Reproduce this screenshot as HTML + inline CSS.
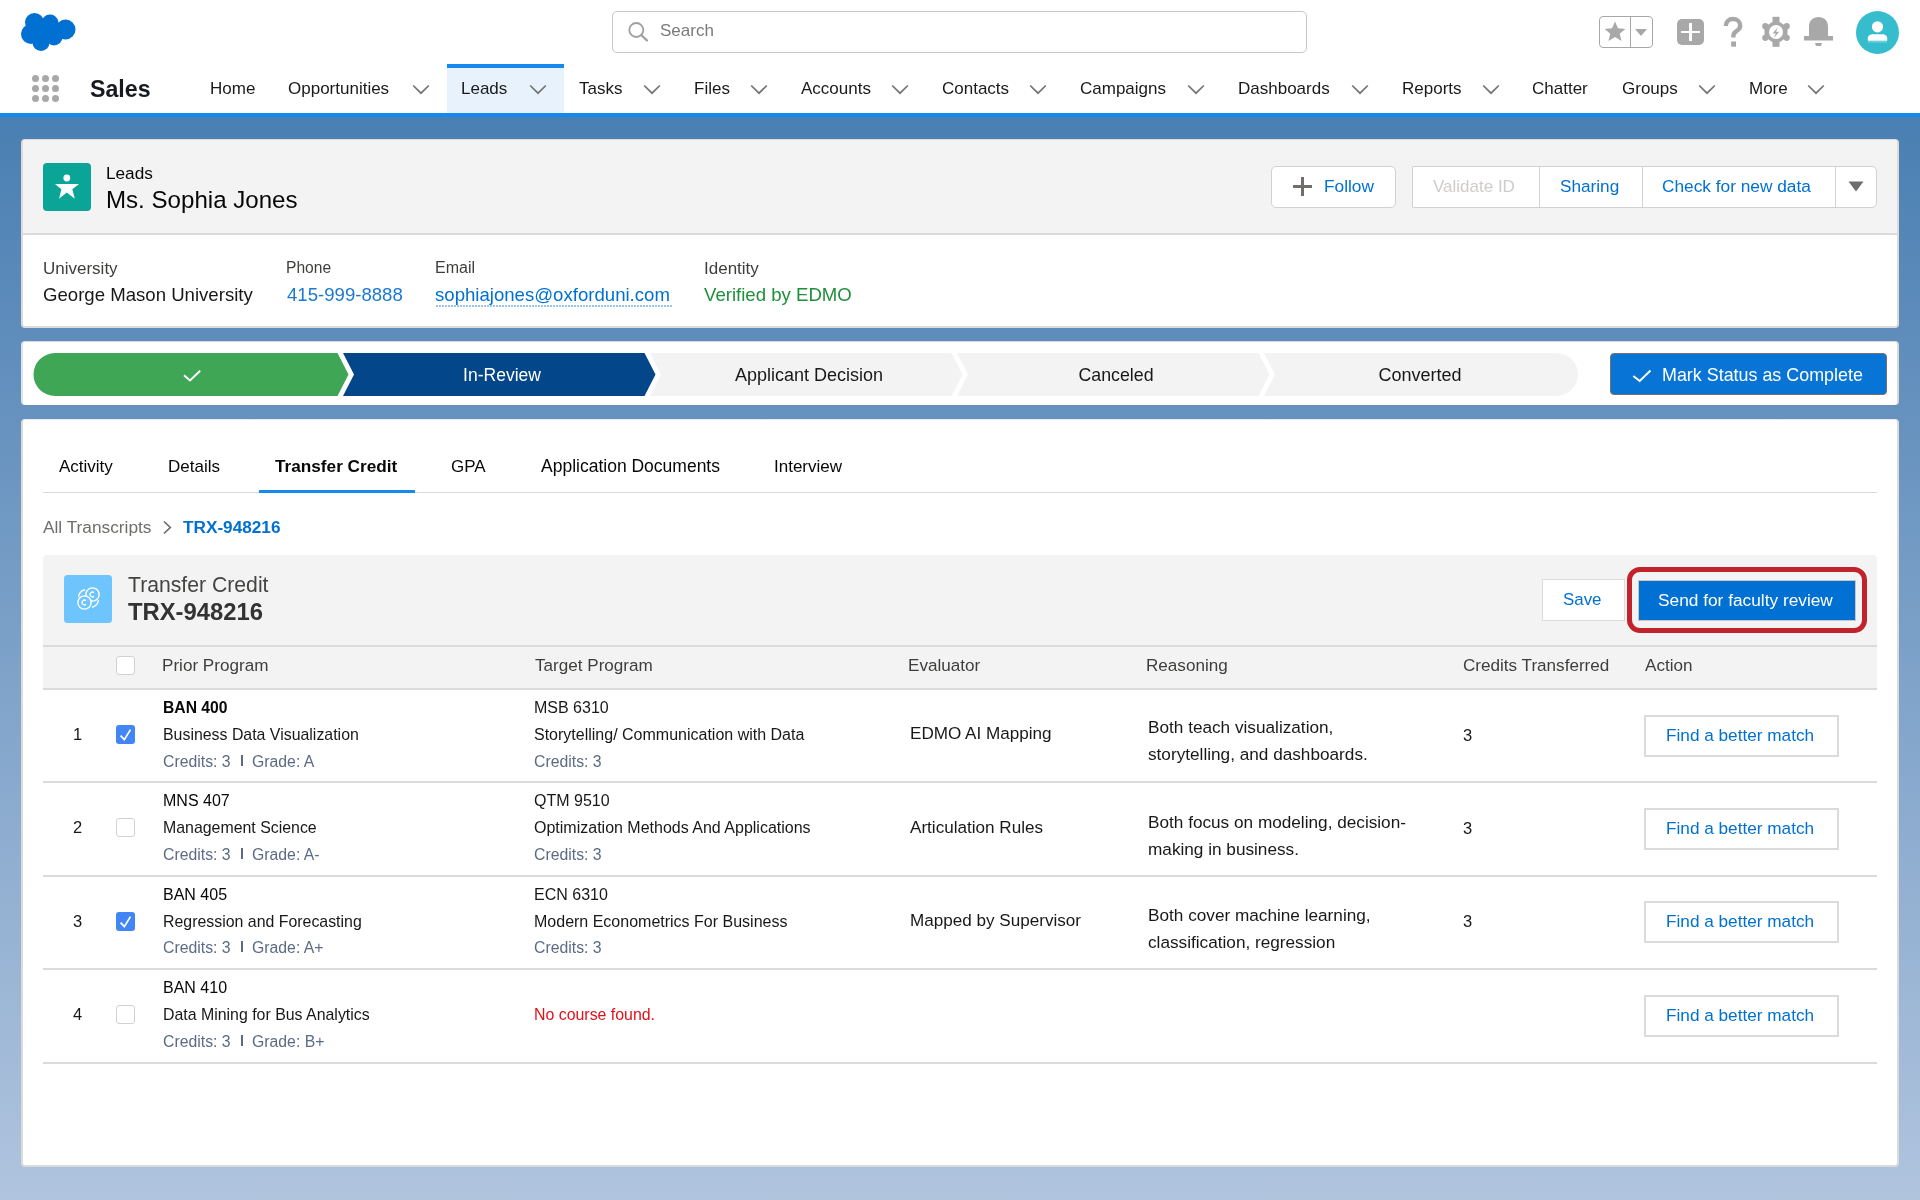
<!DOCTYPE html>
<html><head><meta charset="utf-8"><title>Lead</title>
<style>
*{margin:0;padding:0;box-sizing:border-box}
html,body{width:1920px;height:1200px;overflow:hidden}
body{position:relative;font-family:"Liberation Sans",sans-serif;background:#fff;-webkit-font-smoothing:antialiased}
.a{position:absolute}
.t{position:absolute;white-space:nowrap;will-change:transform}
svg{position:absolute;overflow:visible}
</style></head><body>
<div class="a" style="left:0px;top:0px;width:1920px;height:113px;background:#fff"></div>
<div class="a" style="left:0px;top:113px;width:1920px;height:4px;background:#1589ee"></div>
<div class="a" style="left:0px;top:117px;width:1920px;height:1083px;background:linear-gradient(#4a7fb3,#b0c4de)"></div>
<svg style="left:20px;top:12px" width="57" height="40" viewBox="0 0 57 40"><g fill="#0070d2"><circle cx="14.5" cy="10.5" r="9.5"/><circle cx="30" cy="11" r="8.5"/><circle cx="45.5" cy="17.5" r="10"/><circle cx="11" cy="22" r="10"/><circle cx="21" cy="30.5" r="8.5"/><circle cx="34" cy="25" r="8.5"/><circle cx="25" cy="19" r="10"/></g></svg>
<div class="a" style="left:612px;top:11px;width:695px;height:42px;border:1px solid #c9c7c5;border-radius:5px;background:#fff"></div>
<svg style="left:627px;top:21px" width="24" height="24" viewBox="0 0 24 24"><circle cx="9.3" cy="9" r="7" fill="none" stroke="#a0a0a0" stroke-width="1.8"/><line x1="14.3" y1="14" x2="20" y2="19.5" stroke="#a0a0a0" stroke-width="2.4" stroke-linecap="round"/></svg>
<div class="t" style="left:659.70px;top:20.11px;font-size:17px;line-height:22px;color:#7a7a7a;">Search</div>
<div class="a" style="left:1599px;top:16px;width:54px;height:32px;border:1px solid #a8a8a8;border-radius:4px"></div>
<div class="a" style="left:1629.5px;top:16px;width:1.6px;height:32px;background:#a8a8a8"></div>
<svg style="left:1602.5px;top:20px" width="24" height="23" viewBox="0 0 24 24"><path fill="#a8a8a8" d="M12 1.5l3.1 7.2 7.7.6-5.9 5 1.9 7.6L12 17.8 5.2 21.9l1.9-7.6-5.9-5 7.7-.6z"/></svg>
<svg style="left:1635px;top:29px" width="12" height="8" viewBox="0 0 12 8"><path fill="#a8a8a8" d="M0 0h12L6 7z"/></svg>
<div class="a" style="left:1677px;top:19px;width:27px;height:26px;background:#a8a8a8;border-radius:5px"></div>
<div class="a" style="left:1689.4px;top:23px;width:2.2px;height:18px;background:#fff"></div>
<div class="a" style="left:1681.2px;top:30.9px;width:19px;height:2.2px;background:#fff"></div>
<svg style="left:1721px;top:16px" width="24" height="32" viewBox="0 0 24 32"><path d="M4.8 10C4.8 5.5 8 3 12 3s7.2 2.6 7.2 6.6c0 3.4-2.4 4.8-4.3 6-1.6 1-2.5 2-2.5 4.2v1.6" fill="none" stroke="#a8a8a8" stroke-width="4.4"/><rect x="10.2" y="25.5" width="4.8" height="5.2" fill="#a8a8a8"/></svg>
<svg style="left:1762px;top:16px" width="28" height="31" viewBox="0 0 28 31"><g fill="#a8a8a8"><circle cx="14" cy="16" r="10.5"/><rect x="10.5" y="0.8" width="7" height="6"/><rect x="10.5" y="25" width="7" height="5.8"/><circle cx="3.3" cy="10.2" r="3.1"/><circle cx="24.7" cy="10.2" r="3.1"/><circle cx="3.3" cy="21.8" r="3.1"/><circle cx="24.7" cy="21.8" r="3.1"/><rect x="2.5" y="10" width="4" height="12"/><rect x="21.5" y="10" width="4" height="12"/></g><circle cx="14" cy="16" r="7" fill="#fff"/><path fill="#a8a8a8" d="M15.8 11.2l-5.2 6.2h3.2l-2.2 4.8 5.6-6.4h-3.2z"/></svg>
<svg style="left:1803px;top:16px" width="31" height="32" viewBox="0 0 31 32"><path fill="#a8a8a8" d="M15.5 1c5.6 0 9.5 3.6 9.5 9.5V20h5v4.5H1V20h5v-9.5C6 4.6 9.9 1 15.5 1z"/><path fill="#a8a8a8" d="M12 27h7l-1 3h-5z"/></svg>
<div class="a" style="left:1856px;top:11px;width:43px;height:43px;background:#35bdcd;border-radius:50%"></div>
<svg style="left:1856px;top:11px" width="43" height="43" viewBox="0 0 43 43"><circle cx="21.5" cy="15.8" r="5.6" fill="#fff"/><path fill="#fff" d="M11.8 29.8V27.2C11.8 24.6 14.5 23.3 17 23.3H26C28.5 23.3 31.2 24.6 31.2 27.2V29.8Z"/><rect x="12" y="30.4" width="19" height="1" fill="#fff" opacity=".45"/></svg>
<div class="a" style="left:32px;top:75px;width:7px;height:7px;background:#a8a8a8;border-radius:50%"></div>
<div class="a" style="left:42px;top:75px;width:7px;height:7px;background:#a8a8a8;border-radius:50%"></div>
<div class="a" style="left:52px;top:75px;width:7px;height:7px;background:#a8a8a8;border-radius:50%"></div>
<div class="a" style="left:32px;top:85px;width:7px;height:7px;background:#a8a8a8;border-radius:50%"></div>
<div class="a" style="left:42px;top:85px;width:7px;height:7px;background:#a8a8a8;border-radius:50%"></div>
<div class="a" style="left:52px;top:85px;width:7px;height:7px;background:#a8a8a8;border-radius:50%"></div>
<div class="a" style="left:32px;top:95px;width:7px;height:7px;background:#a8a8a8;border-radius:50%"></div>
<div class="a" style="left:42px;top:95px;width:7px;height:7px;background:#a8a8a8;border-radius:50%"></div>
<div class="a" style="left:52px;top:95px;width:7px;height:7px;background:#a8a8a8;border-radius:50%"></div>
<div class="t" style="left:90.20px;top:73.96px;font-size:23.2px;line-height:30px;color:#16191f;font-weight:700;">Sales</div>
<div class="a" style="left:447px;top:64px;width:117px;height:49px;background:#e7f2fc"></div>
<div class="a" style="left:447px;top:64px;width:117px;height:4px;background:#1589ee"></div>
<div class="t" style="left:210.20px;top:77.91px;font-size:17px;line-height:22px;color:#1a1a1a;">Home</div>
<div class="t" style="left:288.20px;top:77.91px;font-size:17px;line-height:22px;color:#1a1a1a;">Opportunities</div>
<svg style="left:412px;top:84px" width="18" height="11" viewBox="0 0 18 11"><path d="M1.2 1.5L9 9.2 16.8 1.5" fill="none" stroke="#747474" stroke-width="1.7"/></svg>
<div class="t" style="left:461.20px;top:77.91px;font-size:17px;line-height:22px;color:#1a1a1a;">Leads</div>
<svg style="left:529px;top:84px" width="18" height="11" viewBox="0 0 18 11"><path d="M1.2 1.5L9 9.2 16.8 1.5" fill="none" stroke="#747474" stroke-width="1.7"/></svg>
<div class="t" style="left:579.20px;top:77.91px;font-size:17px;line-height:22px;color:#1a1a1a;">Tasks</div>
<svg style="left:643px;top:84px" width="18" height="11" viewBox="0 0 18 11"><path d="M1.2 1.5L9 9.2 16.8 1.5" fill="none" stroke="#747474" stroke-width="1.7"/></svg>
<div class="t" style="left:694.20px;top:77.91px;font-size:17px;line-height:22px;color:#1a1a1a;">Files</div>
<svg style="left:750px;top:84px" width="18" height="11" viewBox="0 0 18 11"><path d="M1.2 1.5L9 9.2 16.8 1.5" fill="none" stroke="#747474" stroke-width="1.7"/></svg>
<div class="t" style="left:801.20px;top:77.91px;font-size:17px;line-height:22px;color:#1a1a1a;">Accounts</div>
<svg style="left:891px;top:84px" width="18" height="11" viewBox="0 0 18 11"><path d="M1.2 1.5L9 9.2 16.8 1.5" fill="none" stroke="#747474" stroke-width="1.7"/></svg>
<div class="t" style="left:942.20px;top:77.91px;font-size:17px;line-height:22px;color:#1a1a1a;">Contacts</div>
<svg style="left:1029px;top:84px" width="18" height="11" viewBox="0 0 18 11"><path d="M1.2 1.5L9 9.2 16.8 1.5" fill="none" stroke="#747474" stroke-width="1.7"/></svg>
<div class="t" style="left:1080.20px;top:77.91px;font-size:17px;line-height:22px;color:#1a1a1a;">Campaigns</div>
<svg style="left:1187px;top:84px" width="18" height="11" viewBox="0 0 18 11"><path d="M1.2 1.5L9 9.2 16.8 1.5" fill="none" stroke="#747474" stroke-width="1.7"/></svg>
<div class="t" style="left:1238.20px;top:77.91px;font-size:17px;line-height:22px;color:#1a1a1a;">Dashboards</div>
<svg style="left:1351px;top:84px" width="18" height="11" viewBox="0 0 18 11"><path d="M1.2 1.5L9 9.2 16.8 1.5" fill="none" stroke="#747474" stroke-width="1.7"/></svg>
<div class="t" style="left:1402.20px;top:77.91px;font-size:17px;line-height:22px;color:#1a1a1a;">Reports</div>
<svg style="left:1482px;top:84px" width="18" height="11" viewBox="0 0 18 11"><path d="M1.2 1.5L9 9.2 16.8 1.5" fill="none" stroke="#747474" stroke-width="1.7"/></svg>
<div class="t" style="left:1532.20px;top:77.91px;font-size:17px;line-height:22px;color:#1a1a1a;">Chatter</div>
<div class="t" style="left:1622.20px;top:77.91px;font-size:17px;line-height:22px;color:#1a1a1a;">Groups</div>
<svg style="left:1698px;top:84px" width="18" height="11" viewBox="0 0 18 11"><path d="M1.2 1.5L9 9.2 16.8 1.5" fill="none" stroke="#747474" stroke-width="1.7"/></svg>
<div class="t" style="left:1749.20px;top:77.91px;font-size:17px;line-height:22px;color:#1a1a1a;">More</div>
<svg style="left:1807px;top:84px" width="18" height="11" viewBox="0 0 18 11"><path d="M1.2 1.5L9 9.2 16.8 1.5" fill="none" stroke="#747474" stroke-width="1.7"/></svg>
<div class="a" style="left:21px;top:139px;width:1878px;height:189px;background:#fff;border:2px solid #dddbda;border-top-width:1px;border-radius:4px;overflow:hidden"></div>
<div class="a" style="left:23px;top:140px;width:1874px;height:94px;background:#f3f3f3;border-radius:3px 3px 0 0"></div>
<div class="a" style="left:23px;top:233px;width:1874px;height:2px;background:#dddbda"></div>
<div class="a" style="left:43px;top:163px;width:48px;height:48px;background:#0aa597;border-radius:4px"></div>
<svg style="left:43px;top:163px" width="48" height="48" viewBox="0 0 48 48"><circle cx="23.8" cy="15" r="3.4" fill="#fff"/><path fill="#fff" d="M12 21H36L29.3 26.3 31.8 35.8 23.8 29.4 16 35.8 18.4 26.3Z"/></svg>
<div class="t" style="left:106.20px;top:161.64px;font-size:17.2px;line-height:22px;color:#080707;">Leads</div>
<div class="t" style="left:105.70px;top:184.35px;font-size:24.1px;line-height:31px;color:#080707;">Ms. Sophia Jones</div>
<div class="a" style="left:1271px;top:166px;width:125px;height:42px;background:#fff;border:1px solid #d4d2cf;border-radius:5px"></div>
<div class="a" style="left:1293px;top:185px;width:19px;height:2.6px;background:#706e6b"></div>
<div class="a" style="left:1301.2px;top:177px;width:2.6px;height:19px;background:#706e6b"></div>
<div class="t" style="left:1324.20px;top:175.01px;font-size:17.3px;line-height:22px;color:#0070d2;">Follow</div>
<div class="a" style="left:1412px;top:166px;width:465px;height:42px;background:#fff;border:1px solid #d4d2cf;border-radius:0 5px 5px 0"></div>
<div class="a" style="left:1539px;top:167px;width:1px;height:40px;background:#d4d2cf"></div>
<div class="a" style="left:1642px;top:167px;width:1px;height:40px;background:#d4d2cf"></div>
<div class="a" style="left:1835px;top:167px;width:1px;height:40px;background:#d4d2cf"></div>
<div class="t" style="left:1433.20px;top:175.91px;font-size:17px;line-height:22px;color:#cfcdcb;">Validate ID</div>
<div class="t" style="left:1559.70px;top:175.04px;font-size:17.2px;line-height:22px;color:#0070d2;">Sharing</div>
<div class="t" style="left:1662.20px;top:175.01px;font-size:17.3px;line-height:22px;color:#0070d2;">Check for new data</div>
<svg style="left:1848px;top:181px" width="16" height="11" viewBox="0 0 16 11"><path fill="#706e6b" d="M0.5 0.5h15L8 10.5z"/></svg>
<div class="t" style="left:42.70px;top:258.11px;font-size:17px;line-height:22px;color:#3e3e3c;">University</div>
<div class="t" style="left:42.70px;top:283.06px;font-size:18.6px;line-height:24px;color:#181818;">George Mason University</div>
<div class="t" style="left:286.20px;top:258.09px;font-size:15.6px;line-height:20px;color:#3e3e3c;">Phone</div>
<div class="t" style="left:287.20px;top:283.06px;font-size:18.6px;line-height:24px;color:#1b79d0;">415-999-8888</div>
<div class="t" style="left:435.20px;top:257.46px;font-size:16px;line-height:21px;color:#3e3e3c;">Email</div>
<div class="t" style="left:435.20px;top:283.06px;font-size:18.6px;line-height:24px;color:#0070d2;">sophiajones@oxforduni.com</div>
<div class="a" style="left:436px;top:305px;width:236px;height:2px;background-image:repeating-linear-gradient(90deg,#9cc3ea 0 2px,transparent 2px 3px)"></div>
<div class="t" style="left:703.70px;top:258.11px;font-size:17px;line-height:22px;color:#3e3e3c;">Identity</div>
<div class="t" style="left:703.70px;top:283.06px;font-size:18.6px;line-height:24px;color:#1f8f3a;">Verified by EDMO</div>
<div class="a" style="left:21px;top:341px;width:1878px;height:64px;background:#fff;border-radius:4px;border-top:1px solid #dcd8d4;border-left:2px solid #dfe3ea;border-right:2px solid #dcd8d4"></div>
<svg style="left:0;top:0" width="1920" height="1200"><path d="M55.0,353 L337.5,353 L348.5,374.5 L337.5,396 L55.0,396 A21.5,21.5 0 0 1 55.0,353 Z" fill="#3ea655"/><path d="M343,353 L644.5,353 L655.5,374.5 L644.5,396 L343,396 L354,374.5 Z" fill="#03468a"/><path d="M650,353 L951.5,353 L962.5,374.5 L951.5,396 L650,396 L661,374.5 Z" fill="#f3f3f3"/><path d="M957,353 L1258.5,353 L1269.5,374.5 L1258.5,396 L957,396 L968,374.5 Z" fill="#f3f3f3"/><path d="M1264,353 L1556.5,353 A21.5,21.5 0 0 1 1556.5,396 L1264,396 L1275,374.5 Z" fill="#f3f3f3"/><path d="M184 375.3L190 380.5 200.2 370.8" fill="none" stroke="#fff" stroke-width="1.9"/></svg>
<div class="t" style="left:1.5px;width:1000px;text-align:center;top:364.44px;font-size:17.5px;line-height:23px;color:#fff;">In-Review</div>
<div class="t" style="left:309px;width:1000px;text-align:center;top:364.26px;font-size:18px;line-height:23px;color:#181818;">Applicant Decision</div>
<div class="t" style="left:615.5px;width:1000px;text-align:center;top:364.33px;font-size:17.8px;line-height:23px;color:#181818;">Canceled</div>
<div class="t" style="left:920px;width:1000px;text-align:center;top:364.26px;font-size:18px;line-height:23px;color:#181818;">Converted</div>
<div class="a" style="left:1610px;top:353px;width:277px;height:42px;background:#0875d6;border:1px solid #7a7068;border-radius:4px"></div>
<svg style="left:1632px;top:368px" width="20" height="16" viewBox="0 0 20 16"><path d="M1.3 8L7.7 13 18.5 2.5" fill="none" stroke="#fff" stroke-width="1.9"/></svg>
<div class="t" style="left:1661.70px;top:363.90px;font-size:17.9px;line-height:23px;color:#fff;">Mark Status as Complete</div>
<div class="a" style="left:21px;top:419px;width:1878px;height:748px;background:#fff;border:2px solid #dddbda;border-top:1px solid #e8e8e8;border-radius:4px"></div>
<div class="a" style="left:43px;top:492px;width:1834px;height:1px;background:#dddbda"></div>
<div class="a" style="left:259px;top:490px;width:156px;height:3px;background:#1589ee"></div>
<div class="t" style="left:58.70px;top:455.61px;font-size:17px;line-height:22px;color:#080707;">Activity</div>
<div class="t" style="left:167.70px;top:455.61px;font-size:17px;line-height:22px;color:#080707;">Details</div>
<div class="t" style="left:274.70px;top:455.04px;font-size:17.2px;line-height:22px;color:#080707;font-weight:700;">Transfer Credit</div>
<div class="t" style="left:451.40px;top:455.61px;font-size:17px;line-height:22px;color:#080707;">GPA</div>
<div class="t" style="left:540.90px;top:454.94px;font-size:17.5px;line-height:23px;color:#080707;">Application Documents</div>
<div class="t" style="left:773.70px;top:455.61px;font-size:17px;line-height:22px;color:#080707;">Interview</div>
<div class="t" style="left:42.80px;top:516.31px;font-size:17.3px;line-height:22px;color:#706e6b;">All Transcripts</div>
<svg style="left:162px;top:520px" width="10" height="14" viewBox="0 0 10 14"><path d="M2 1.5L8.3 7.5 2 13.5" fill="none" stroke="#6b6b6b" stroke-width="1.7"/></svg>
<div class="t" style="left:183.00px;top:516.34px;font-size:17.2px;line-height:22px;color:#0070d2;font-weight:700;">TRX-948216</div>
<div class="a" style="left:43px;top:555px;width:1834px;height:91px;background:#f3f3f3;border-radius:4px 4px 0 0"></div>
<div class="a" style="left:43px;top:645px;width:1834px;height:2px;background:#dddbda"></div>
<div class="a" style="left:43px;top:647px;width:1834px;height:41px;background:#f3f3f3"></div>
<div class="a" style="left:43px;top:688px;width:1834px;height:1.5px;background:#dddbda"></div>
<div class="a" style="left:64px;top:575px;width:48px;height:48px;background:#6ec4fc;border-radius:3.5px"></div>
<svg style="left:64px;top:575px" width="48" height="48" viewBox="0 0 48 48"><g fill="none" stroke="#fff" stroke-width="1.4"><circle cx="28.5" cy="19.5" r="6.6"/><circle cx="20.5" cy="27.5" r="6.6" fill="#6ec4fc"/><path d="M30 17.6a2.4 2.4 0 1 0 0 3.8"/><path d="M22 25.6a2.4 2.4 0 1 0 0 3.8"/><path d="M14.5 22a8.5 8.5 0 0 1 6.5-7.2"/><path d="M34.5 25a8.5 8.5 0 0 1-6.5 7.2"/></g></svg>
<div class="t" style="left:127.60px;top:570.65px;font-size:21.2px;line-height:28px;color:#444442;">Transfer Credit</div>
<div class="t" style="left:127.60px;top:595.95px;font-size:23.8px;line-height:31px;color:#333;font-weight:700;">TRX-948216</div>
<div class="a" style="left:1541.5px;top:579px;width:83px;height:42px;background:#fff;border:1px solid #dddbda"></div>
<div class="t" style="left:1562.50px;top:588.64px;font-size:16.9px;line-height:22px;color:#0070d2;">Save</div>
<div class="a" style="left:1638px;top:580px;width:218px;height:41px;background:#0070d2;border:1px solid #c9c7c5"></div>
<div class="t" style="left:1658.20px;top:588.51px;font-size:17.3px;line-height:22px;color:#fff;">Send for faculty review</div>
<div class="a" style="left:1627px;top:567px;width:240px;height:66px;border:5px solid #c1222b;border-radius:13px"></div>
<div class="a" style="left:116px;top:656px;width:19px;height:19px;background:#fff;border:1px solid #d4d2cf;border-radius:3px"></div>
<div class="t" style="left:161.50px;top:654.67px;font-size:17.1px;line-height:22px;color:#3e3e3c;">Prior Program</div>
<div class="t" style="left:534.60px;top:654.67px;font-size:17.1px;line-height:22px;color:#3e3e3c;">Target Program</div>
<div class="t" style="left:907.50px;top:654.67px;font-size:17.1px;line-height:22px;color:#3e3e3c;">Evaluator</div>
<div class="t" style="left:1146.20px;top:654.67px;font-size:17.1px;line-height:22px;color:#3e3e3c;">Reasoning</div>
<div class="t" style="left:1463.20px;top:654.67px;font-size:17.1px;line-height:22px;color:#3e3e3c;">Credits Transferred</div>
<div class="t" style="left:1644.90px;top:654.67px;font-size:17.1px;line-height:22px;color:#3e3e3c;">Action</div>
<div class="a" style="left:43px;top:781px;width:1834px;height:2px;background:#dddbda"></div>
<div class="t" style="left:72.50px;top:724.08px;font-size:16.5px;line-height:21px;color:#181818;">1</div>
<div class="a" style="left:116px;top:725.0px;width:19px;height:19px;background:#4285f4;border-radius:3px"></div>
<svg style="left:116px;top:725.00px" width="19" height="19" viewBox="0 0 19 19"><path d="M4.6 10.6L8.3 14.6 14.5 4.6" fill="none" stroke="#fff" stroke-width="1.8"/></svg>
<div class="t" style="left:163.20px;top:697.56px;font-size:15.7px;line-height:20px;color:#080707;font-weight:700;">BAN 400</div>
<div class="t" style="left:163.20px;top:723.99px;font-size:15.9px;line-height:21px;color:#181818;">Business Data Visualization</div>
<div class="t" style="left:163.20px;top:750.53px;font-size:15.8px;line-height:21px;color:#5c6b85;">Credits: 3</div>
<div class="a" style="left:241px;top:754.5px;width:2.2px;height:11px;background:#5c6b85"></div>
<div class="t" style="left:252.20px;top:750.53px;font-size:15.8px;line-height:21px;color:#5c6b85;">Grade: A</div>
<div class="t" style="left:533.50px;top:696.96px;font-size:16px;line-height:21px;color:#181818;">MSB 6310</div>
<div class="t" style="left:533.50px;top:723.96px;font-size:16px;line-height:21px;color:#181818;">Storytelling/ Communication with Data</div>
<div class="t" style="left:533.50px;top:750.53px;font-size:15.8px;line-height:21px;color:#5c6b85;">Credits: 3</div>
<div class="t" style="left:909.80px;top:723.27px;font-size:17.1px;line-height:22px;color:#181818;">EDMO AI Mapping</div>
<div class="t" style="left:1147.50px;top:715.74px;font-size:17.2px;line-height:22px;color:#181818;">Both teach visualization,</div>
<div class="t" style="left:1147.50px;top:742.74px;font-size:17.2px;line-height:22px;color:#181818;">storytelling, and dashboards.</div>
<div class="t" style="left:1462.60px;top:724.58px;font-size:16.5px;line-height:21px;color:#181818;">3</div>
<div class="a" style="left:1644px;top:714.5px;width:195px;height:42px;background:#fff;border:2px solid #dddbda"></div>
<div class="t" style="left:1665.80px;top:723.54px;font-size:17.2px;line-height:22px;color:#0070d2;">Find a better match</div>
<div class="a" style="left:43px;top:875px;width:1834px;height:2px;background:#dddbda"></div>
<div class="t" style="left:72.50px;top:817.48px;font-size:16.5px;line-height:21px;color:#181818;">2</div>
<div class="a" style="left:116px;top:818.4px;width:19px;height:19px;background:#fff;border:1px solid #d4d2cf;border-radius:3px"></div>
<div class="t" style="left:163.20px;top:790.36px;font-size:16px;line-height:21px;color:#080707;">MNS 407</div>
<div class="t" style="left:163.20px;top:817.39px;font-size:15.9px;line-height:21px;color:#181818;">Management Science</div>
<div class="t" style="left:163.20px;top:843.93px;font-size:15.8px;line-height:21px;color:#5c6b85;">Credits: 3</div>
<div class="a" style="left:241px;top:847.9px;width:2.2px;height:11px;background:#5c6b85"></div>
<div class="t" style="left:252.20px;top:843.93px;font-size:15.8px;line-height:21px;color:#5c6b85;">Grade: A-</div>
<div class="t" style="left:533.50px;top:790.36px;font-size:16px;line-height:21px;color:#181818;">QTM 9510</div>
<div class="t" style="left:533.50px;top:817.36px;font-size:16px;line-height:21px;color:#181818;">Optimization Methods And Applications</div>
<div class="t" style="left:533.50px;top:843.93px;font-size:15.8px;line-height:21px;color:#5c6b85;">Credits: 3</div>
<div class="t" style="left:909.80px;top:816.67px;font-size:17.1px;line-height:22px;color:#181818;">Articulation Rules</div>
<div class="t" style="left:1147.50px;top:810.74px;font-size:17.2px;line-height:22px;color:#181818;">Both focus on modeling, decision-</div>
<div class="t" style="left:1147.50px;top:837.74px;font-size:17.2px;line-height:22px;color:#181818;">making in business.</div>
<div class="t" style="left:1462.60px;top:817.98px;font-size:16.5px;line-height:21px;color:#181818;">3</div>
<div class="a" style="left:1644px;top:807.9px;width:195px;height:42px;background:#fff;border:2px solid #dddbda"></div>
<div class="t" style="left:1665.80px;top:816.94px;font-size:17.2px;line-height:22px;color:#0070d2;">Find a better match</div>
<div class="a" style="left:43px;top:968px;width:1834px;height:2px;background:#dddbda"></div>
<div class="t" style="left:72.50px;top:910.88px;font-size:16.5px;line-height:21px;color:#181818;">3</div>
<div class="a" style="left:116px;top:911.8px;width:19px;height:19px;background:#4285f4;border-radius:3px"></div>
<svg style="left:116px;top:911.80px" width="19" height="19" viewBox="0 0 19 19"><path d="M4.6 10.6L8.3 14.6 14.5 4.6" fill="none" stroke="#fff" stroke-width="1.8"/></svg>
<div class="t" style="left:163.20px;top:883.76px;font-size:16px;line-height:21px;color:#080707;">BAN 405</div>
<div class="t" style="left:163.20px;top:910.79px;font-size:15.9px;line-height:21px;color:#181818;">Regression and Forecasting</div>
<div class="t" style="left:163.20px;top:937.33px;font-size:15.8px;line-height:21px;color:#5c6b85;">Credits: 3</div>
<div class="a" style="left:241px;top:941.3px;width:2.2px;height:11px;background:#5c6b85"></div>
<div class="t" style="left:252.20px;top:937.33px;font-size:15.8px;line-height:21px;color:#5c6b85;">Grade: A+</div>
<div class="t" style="left:533.50px;top:883.76px;font-size:16px;line-height:21px;color:#181818;">ECN 6310</div>
<div class="t" style="left:533.50px;top:910.76px;font-size:16px;line-height:21px;color:#181818;">Modern Econometrics For Business</div>
<div class="t" style="left:533.50px;top:937.33px;font-size:15.8px;line-height:21px;color:#5c6b85;">Credits: 3</div>
<div class="t" style="left:909.80px;top:910.07px;font-size:17.1px;line-height:22px;color:#181818;">Mapped by Supervisor</div>
<div class="t" style="left:1147.50px;top:903.74px;font-size:17.2px;line-height:22px;color:#181818;">Both cover machine learning,</div>
<div class="t" style="left:1147.50px;top:930.74px;font-size:17.2px;line-height:22px;color:#181818;">classification, regression</div>
<div class="t" style="left:1462.60px;top:911.38px;font-size:16.5px;line-height:21px;color:#181818;">3</div>
<div class="a" style="left:1644px;top:901.3px;width:195px;height:42px;background:#fff;border:2px solid #dddbda"></div>
<div class="t" style="left:1665.80px;top:910.34px;font-size:17.2px;line-height:22px;color:#0070d2;">Find a better match</div>
<div class="a" style="left:43px;top:1062px;width:1834px;height:2px;background:#dddbda"></div>
<div class="t" style="left:72.50px;top:1004.28px;font-size:16.5px;line-height:21px;color:#181818;">4</div>
<div class="a" style="left:116px;top:1005.2px;width:19px;height:19px;background:#fff;border:1px solid #d4d2cf;border-radius:3px"></div>
<div class="t" style="left:163.20px;top:977.16px;font-size:16px;line-height:21px;color:#080707;">BAN 410</div>
<div class="t" style="left:163.20px;top:1004.19px;font-size:15.9px;line-height:21px;color:#181818;">Data Mining for Bus Analytics</div>
<div class="t" style="left:163.20px;top:1030.73px;font-size:15.8px;line-height:21px;color:#5c6b85;">Credits: 3</div>
<div class="a" style="left:241px;top:1034.7px;width:2.2px;height:11px;background:#5c6b85"></div>
<div class="t" style="left:252.20px;top:1030.73px;font-size:15.8px;line-height:21px;color:#5c6b85;">Grade: B+</div>
<div class="t" style="left:533.50px;top:1004.19px;font-size:15.9px;line-height:21px;color:#e3101a;">No course found.</div>
<div class="a" style="left:1644px;top:994.7px;width:195px;height:42px;background:#fff;border:2px solid #dddbda"></div>
<div class="t" style="left:1665.80px;top:1003.74px;font-size:17.2px;line-height:22px;color:#0070d2;">Find a better match</div>
</body></html>
